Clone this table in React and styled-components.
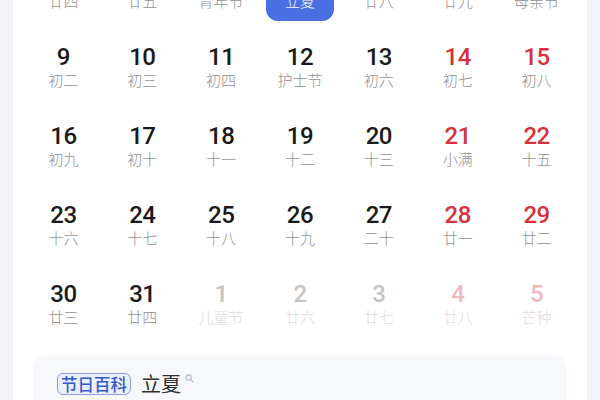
import React from 'react';
import styled, { createGlobalStyle, css } from 'styled-components';

const GlobalStyle = createGlobalStyle`
  html, body {
    margin    : 0;
    padding   : 0;
    background: #f3f4f9;
    overflow  : hidden;
  }
  body {
    font-family: Roboto, "Noto Sans CJK SC", sans-serif;
  }
`;

// kind: '' normal, 'rest' weekend red, 'next' next month grey, 'nextRest' next month red
const rows = [
  [
    { d: '3', l: '廿四' },
    { d: '4', l: '廿五' },
    { d: '4', l: '青年节' },
    { d: '5', l: '立夏', selected: true },
    { d: '6', l: '廿八' },
    { d: '7', l: '廿九', kind: 'rest' },
    { d: '8', l: '母亲节', kind: 'rest' },
  ],
  [
    { d: '9', l: '初二' },
    { d: '10', l: '初三' },
    { d: '11', l: '初四' },
    { d: '12', l: '护士节' },
    { d: '13', l: '初六' },
    { d: '14', l: '初七', kind: 'rest' },
    { d: '15', l: '初八', kind: 'rest' },
  ],
  [
    { d: '16', l: '初九' },
    { d: '17', l: '初十' },
    { d: '18', l: '十一' },
    { d: '19', l: '十二' },
    { d: '20', l: '十三' },
    { d: '21', l: '小满', kind: 'rest' },
    { d: '22', l: '十五', kind: 'rest' },
  ],
  [
    { d: '23', l: '十六' },
    { d: '24', l: '十七' },
    { d: '25', l: '十八' },
    { d: '26', l: '十九' },
    { d: '27', l: '二十' },
    { d: '28', l: '廿一', kind: 'rest' },
    { d: '29', l: '廿二', kind: 'rest' },
  ],
  [
    { d: '30', l: '廿三' },
    { d: '31', l: '廿四' },
    { d: '1', l: '儿童节', kind: 'next' },
    { d: '2', l: '廿六', kind: 'next' },
    { d: '3', l: '廿七', kind: 'next' },
    { d: '4', l: '廿八', kind: 'nextRest' },
    { d: '5', l: '芒种', kind: 'nextRest' },
  ],
];

const SearchIcon = () => (
  <svg width="9" height="9" viewBox="0 0 9 9" fill="none">
    <circle cx="3.6" cy="3.6" r="2.7" stroke="#b4b8c4" strokeWidth="1.1" />
    <path d="M5.7 5.7 L8.2 8.2" stroke="#b4b8c4" strokeWidth="1.1" strokeLinecap="round" />
  </svg>
);

export default function App() {
  return (
    <>
      <GlobalStyle />
      <Card>
        <Grid>
          {rows.flat().map((c, i) => (
            <Cell key={i} selected={c.selected}>
              <DayNum kind={c.kind} selected={c.selected}>{c.d}</DayNum>
              <Lunar kind={c.kind} selected={c.selected}>{c.l}</Lunar>
            </Cell>
          ))}
        </Grid>

        <InfoPanel>
          <InfoRow>
            <Tag>节日百科</Tag>
            <Term>立夏</Term>
            <SearchMark><SearchIcon /></SearchMark>
          </InfoRow>
        </InfoPanel>
      </Card>
    </>
  );
}

const Card = styled.div`
  display   : flow-root;
  margin    : 0 13px;
  height    : 100vh;
  overflow  : hidden;
  background: #ffffff;
  padding   : 0 11px;
  box-sizing: border-box;
`;

const Grid = styled.div`
  display              : grid;
  grid-template-columns: repeat(7, 1fr);
  row-gap              : 15px;
  margin-top           : -43px;
`;

const Cell = styled.div`
  justify-self   : center;
  width          : 68px;
  height         : 64px;
  box-sizing     : border-box;
  padding        : 8px 0 10px;
  display        : flex;
  flex-direction : column;
  align-items    : center;
  border-radius  : 12px;
  ${(p) => p.selected && css`
    background: #4a6fe3;
  `}
`;

const numColor = (p) => {
  if (p.selected) return '#ffffff';
  if (p.kind === 'rest') return '#d5323c';
  if (p.kind === 'next') return '#c4c4c6';
  if (p.kind === 'nextRest') return '#f0b9bd';
  return '#1a1a1a';
};

const lunarColor = (p) => {
  if (p.selected) return '#ffffff';
  if (p.kind === 'next') return '#dcdcde';
  if (p.kind === 'nextRest') return '#ebd9da';
  return '#909092';
};

const DayNum = styled.div`
  height        : 26px;
  line-height   : 26px;
  font-family   : Roboto, sans-serif;
  font-size     : 24px;
  font-weight   : 500;
  letter-spacing: -0.5px;
  color         : ${numColor};
`;

const Lunar = styled.div`
  height     : 20px;
  line-height: 20px;
  font-family: "Noto Sans CJK SC", sans-serif;
  font-size  : 15px;
  font-weight: 300;
  color      : ${lunarColor};
  white-space: nowrap;
`;

const InfoPanel = styled.div`
  margin       : 18px 9px 0;
  height       : 80px;
  background   : #f7f8fb;
  border-radius: 14px;
  padding      : 18px 24px;
  box-sizing   : border-box;
`;

const InfoRow = styled.div`
  display    : flex;
  align-items: center;
`;

const Tag = styled.span`
  display      : inline-flex;
  align-items  : center;
  height       : 22px;
  padding      : 0 3px;
  border       : 1px solid #8aa0e2;
  border-radius: 6px;
  background   : #eaf0fd;
  color        : #3558c9;
  font-family  : "Noto Sans CJK SC", sans-serif;
  font-size    : 16.5px;
  font-weight  : 500;
  box-sizing   : border-box;
`;

const Term = styled.span`
  margin-left: 10px;
  font-family: "Noto Sans CJK SC", sans-serif;
  font-size  : 20px;
  color      : #2f2f33;
  line-height: 22px;
`;

const SearchMark = styled.span`
  align-self : flex-start;
  margin-left: 4px;
  margin-top : 1px;
  line-height: 0;
`;
